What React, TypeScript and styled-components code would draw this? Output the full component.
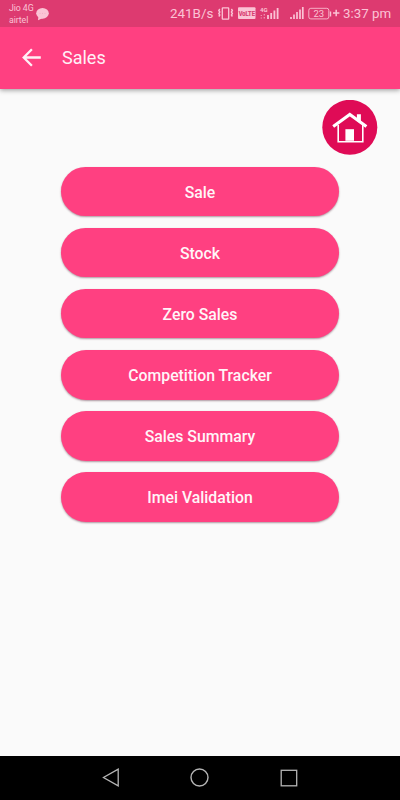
import React from "react";
import styled, { createGlobalStyle } from "styled-components";

const GlobalStyle = createGlobalStyle`
  * { box-sizing: border-box; }
  body { margin: 0; font-family: Roboto, sans-serif; background: #fafafa; }
`;

const Screen = styled.div`
  width: 400px;
  height: 800px;
  display: flex;
  flex-direction: column;
  overflow: hidden;
  background: #fafafa;
`;

const StatusBar = styled.header`
  position: relative;
  z-index: 1;
  height: 27px;
  flex: none;
  display: flex;
  align-items: center;
  background: #dd3a70;
  color: #fbc3d5;
  padding-left: 9px;
`;

const Carriers = styled.div`
  width: 27px;
  font-size: 8.8px;
  line-height: 12px;
  letter-spacing: -0.1px;
  white-space: nowrap;
  padding-top: 1px;
`;

const StatusIcons = styled.svg`
  display: block;
  flex: none;
`;

const Speed = styled.span`
  width: 48px;
  margin-left: 121px;
  font-size: 13.4px;
  line-height: 27px;
  white-space: nowrap;
`;

const Clock = styled.span`
  font-size: 13.3px;
  line-height: 27px;
  white-space: nowrap;
`;

const AppBar = styled.div`
  height: 62px;
  flex: none;
  display: flex;
  align-items: center;
  gap: 20px;
  padding-left: 22px;
  background: #ff4081;
  color: #fff0f6;
  box-shadow: 0 1px 5px rgba(0, 0, 0, 0.42);
`;

const Title = styled.h1`
  margin: 0;
  font-size: 18px;
  line-height: 24px;
  font-weight: 400;
`;

const IconButton = styled.button`
  display: flex;
  padding: 0;
  border: 0;
  background: none;
  color: inherit;
`;

const Content = styled.main`
  flex: 1;
  display: flex;
  flex-direction: column;
  padding-top: 11px;
`;

const HomeButton = styled(IconButton)`
  align-self: flex-end;
  margin-right: 22px;
`;

const Menu = styled.nav`
  display: flex;
  flex-direction: column;
  gap: 11.4px;
  padding: 10.6px 61px 0;
`;

const MenuButton = styled.button`
  height: 49.7px;
  border: 0;
  border-radius: 25px;
  background: #ff4081;
  color: #fff5f8;
  font: 500 15.8px/20px Roboto, sans-serif;
  padding: 2.8px 0 0;
  box-shadow: 0 1px 2px rgba(60, 0, 25, 0.4);
`;

const NavBar = styled.footer`
  height: 44px;
  flex: none;
  display: flex;
  align-items: center;
  justify-content: space-between;
  padding: 0 102px 1px;
  background: #000;
  color: #b5b5b5;
`;

const items = ["Sale", "Stock", "Zero Sales", "Competition Tracker", "Sales Summary", "Imei Validation"];

const MessageIcon = () => (
  <StatusIcons width="13" height="14" viewBox="0 0 13 14" fill="currentColor">
    <ellipse cx="6.5" cy="6.3" rx="6.3" ry="5.4" />
    <path d="M2.4 9.5 2 13.3 7 11z" />
    <g fill="#f3adc4">
      <circle cx="4" cy="6.3" r=".6" />
      <circle cx="6.5" cy="6.3" r=".6" />
      <circle cx="9" cy="6.3" r=".6" />
    </g>
  </StatusIcons>
);

const SignalIcons = () => (
  <StatusIcons width="125" height="27" viewBox="218 0 125 27" fill="none" stroke="currentColor">
    <rect x="222.3" y="7.8" width="6.4" height="11.4" rx=".5" strokeWidth="1.3" />
    <path d="m219.8 9-1 1.5 1 1.5-1 1.5 1 1.5-1 1.5M231.4 9l1 1.5-1 1.5 1 1.5-1 1.5 1 1.5" strokeWidth="1.4" />
    <rect x="238" y="7.3" width="17.5" height="11.7" rx="1" fill="currentColor" stroke="none" />
    <text transform="translate(246.8 16.2) scale(.72 1)" fontSize="8" fontWeight="700" textAnchor="middle" fill="#d93c70" stroke="#d93c70" strokeWidth=".2">VoLTE</text>
    <text x="260" y="12" fontSize="6" fontWeight="700" fill="currentColor" stroke="none">4G</text>
    <path d="M261.3 15v1M261.3 17.5v1M264.3 14v1.5M264.3 17v1.5" strokeWidth="1.3" opacity=".65" />
    <path d="M268 19v-4M271.2 19v-6M274.4 19V10.5M277.6 19V8" strokeWidth="1.8" />
    <path d="M291 19v-2M294 19v-4.5M297 19v-7M300 19V9.5M302.8 19V7" strokeWidth="1.7" />
    <rect x="308.8" y="8.3" width="20" height="10.6" rx="2" strokeWidth="1" opacity=".85" />
    <path d="M330.5 11.5v5" strokeWidth="1.4" />
    <text x="318.8" y="17" fontSize="9.5" textAnchor="middle" fill="currentColor" stroke="none">23</text>
    <path d="M333 13h6.4M336.2 9.8v6.4" strokeWidth="1.5" />
  </StatusIcons>
);

const BackArrow = () => (
  <svg width="20" height="20" viewBox="0 0 20 20" fill="none" stroke="currentColor" strokeWidth="2.3">
    <path d="M18.8 9.5H2M9.9 1.2 1.7 9.5l8.2 8.3" />
  </svg>
);

const HomeIcon = () => (
  <svg width="56" height="56" viewBox="0 0 56 56">
    <circle cx="27.8" cy="27.3" r="27.5" fill="#df0b56" />
    <path d="M16.2 25v16.8h24.6V25" fill="none" stroke="#fff" strokeWidth="1.6" />
    <path d="M34.9 21v-6.8h4V24z" fill="#fff" />
    <path d="m11.2 26.5 16.6-12 16.6 12" fill="none" stroke="#fff" strokeWidth="3.1" />
    <path d="M23.4 29.2H32v11.6h-8.6z" fill="#fff" />
  </svg>
);

export default function App() {
  return (
    <Screen>
      <GlobalStyle />
      <StatusBar>
        <Carriers>Jio 4G<br />airtel</Carriers>
        <MessageIcon />
        <Speed>241B/s</Speed>
        <SignalIcons />
        <Clock>3:37 pm</Clock>
      </StatusBar>
      <AppBar>
        <IconButton aria-label="Back"><BackArrow /></IconButton>
        <Title>Sales</Title>
      </AppBar>
      <Content>
        <HomeButton aria-label="Home"><HomeIcon /></HomeButton>
        <Menu>
          {items.map((item) => <MenuButton key={item}>{item}</MenuButton>)}
        </Menu>
      </Content>
      <NavBar>
        <svg width="17" height="19" viewBox="0 0 17 19" fill="none" stroke="currentColor" strokeWidth="1.3"><path d="M16.2 1.2v16.6L1.5 9.5z" /></svg>
        <svg width="19" height="19" viewBox="0 0 19 19" fill="none" stroke="currentColor" strokeWidth="1.4"><circle cx="9.5" cy="9.5" r="8.5" /></svg>
        <svg width="18" height="18" viewBox="0 0 18 18" fill="none" stroke="currentColor" strokeWidth="1.3"><rect x="1.2" y="1.3" width="15.5" height="15.5" /></svg>
      </NavBar>
    </Screen>
  );
}
